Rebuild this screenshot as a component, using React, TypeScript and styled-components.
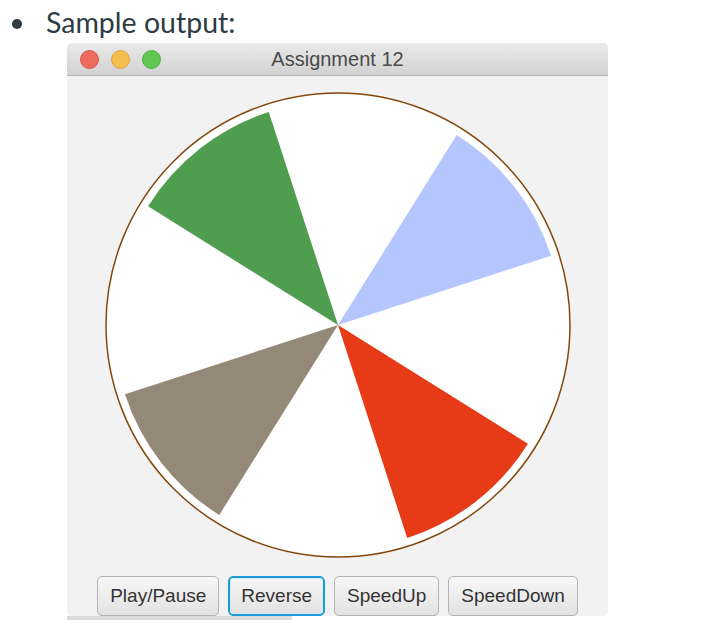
import styled, { createGlobalStyle, css } from 'styled-components';

const GlobalStyle = createGlobalStyle`
  html, body {
    margin: 0;
    padding: 0;
    background: #ffffff;
  }
  body {
    font-family: 'Liberation Sans', Arial, sans-serif;
  }
`;

const Page = styled.div`
  width: 716px;
  height: 634px;
  overflow: hidden;
`;

const BulletLine = styled.div`
  display: flex;
  align-items: center;
  height: 43px;
  padding-left: 12px;
  box-sizing: border-box;
`;

const Bullet = styled.span`
  width: 10px;
  height: 10px;
  border-radius: 50%;
  background: #2d3b45;
  margin-top: 4px;
`;

const Label = styled.p`
  margin: 0 0 0 24px;
  font-family: Lato, 'Noto Sans', sans-serif;
  font-size: 28.5px;
  color: #2d3b45;
  line-height: 1;
  padding-top: 1px;
`;

const Window = styled.div`
  width: 541px;
  margin-left: 67px;
  background: #f2f2f2;
  border-radius: 5px;
  overflow: hidden;
`;

const TitleBar = styled.div`
  display: grid;
  grid-template-columns: 1fr auto 1fr;
  align-items: center;
  height: 32px;
  background: linear-gradient(#e9e9e9, #d2d2d2);
  border-bottom: 1px solid #b4b4b4;
`;

const Lights = styled.div`
  display: flex;
  gap: 12px;
  padding-left: 13px;
`;

const Light = styled.span<{ $color: string; $edge: string }>`
  box-sizing: border-box;
  width: 19px;
  height: 19px;
  border-radius: 50%;
  background: ${(p) => p.$color};
  border: 1px solid ${(p) => p.$edge};
`;

const Title = styled.span`
  font-size: 20px;
  color: #4a4a4a;
`;

const Content = styled.div`
  display: flex;
  flex-direction: column;
  align-items: center;
  padding-top: 16px;
`;

const Wheel = styled.svg`
  display: block;
`;

const ButtonRow = styled.div`
  display: flex;
  gap: 9px;
  margin-top: 18px;
`;

const Button = styled.button<{ $focused?: boolean }>`
  height: 40px;
  padding: 0 12px;
  font-family: 'Liberation Sans', Arial, sans-serif;
  font-size: 19px;
  color: #333333;
  background: linear-gradient(#f7f7f7, #e2e2e2);
  border: 1px solid #b3b3b3;
  border-radius: 5px;
  ${(p) =>
    p.$focused &&
    css`
      border-color: #1d9bd6;
      box-shadow: inset 0 0 0 1px #1d9bd6, inset 0 0 0 2px #d4ecf8;
    `}
`;

const Underlay = styled.div`
  width: 225px;
  height: 4px;
  margin-left: 67px;
  background: #dcdcdc;
`;

const SIZE = 466;
const C = SIZE / 2;
const RING = 232;
const BLADE = 224;

const blades = [
  { start: 18, color: '#b5c5fe' },
  { start: 108, color: '#4f9d4f' },
  { start: 198, color: '#948978' },
  { start: 288, color: '#e63b16' },
];

// angles in degrees, counter-clockwise from 3 o'clock
const point = (deg: number) => {
  const r = (deg * Math.PI) / 180;
  return `${(C + BLADE * Math.cos(r)).toFixed(2)} ${(C - BLADE * Math.sin(r)).toFixed(2)}`;
};

const bladePath = (start: number) =>
  `M ${C} ${C} L ${point(start)} A ${BLADE} ${BLADE} 0 0 0 ${point(start + 40)} Z`;

const App = () => (
  <Page>
    <GlobalStyle />
    <BulletLine>
      <Bullet />
      <Label>Sample output:</Label>
    </BulletLine>
    <Window>
      <TitleBar>
        <Lights>
          <Light $color='#ee6a5f' $edge='#d9574c' />
          <Light $color='#f5be4f' $edge='#dea53a' />
          <Light $color='#62c655' $edge='#50ae44' />
        </Lights>
        <Title>Assignment 12</Title>
        <span />
      </TitleBar>
      <Content>
        <Wheel width={SIZE} height={SIZE} viewBox={`0 0 ${SIZE} ${SIZE}`}>
          <circle cx={C} cy={C} r={RING} fill='#ffffff' stroke='#84480f' strokeWidth={1.5} />
          {blades.map(({ start, color }) => (
            <path key={start} d={bladePath(start)} fill={color} />
          ))}
        </Wheel>
        <ButtonRow>
          <Button>Play/Pause</Button>
          <Button $focused>Reverse</Button>
          <Button>SpeedUp</Button>
          <Button>SpeedDown</Button>
        </ButtonRow>
      </Content>
    </Window>
    <Underlay />
  </Page>
);

export default App;
